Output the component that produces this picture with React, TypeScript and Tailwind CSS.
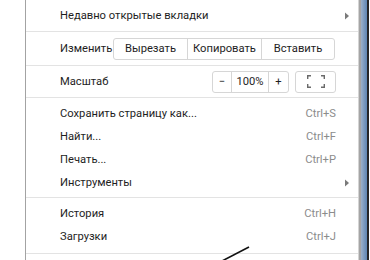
import { ReactNode } from "react";

const font = { fontFamily: 'Roboto, "Noto Sans", sans-serif' };

function Arrow() {
  return (
    <svg width="4" height="8" viewBox="0 0 4 8">
      <path d="M0 0.5 L4 4 L0 7.5 Z" fill="#7a7a7a" />
    </svg>
  );
}

function Item({ label, shortcut }: { label: string; shortcut: string }) {
  return (
    <div className="flex h-[23px] items-center justify-between pl-[34px] pr-[22px]">
      <span className="text-[#1e1e1e]">{label}</span>
      <span className="text-[#8c8c8c]">{shortcut}</span>
    </div>
  );
}

function SubItem({ label, className }: { label: string; className: string }) {
  return (
    <div className={`flex items-center justify-between pl-[34px] pr-[9px] ${className}`}>
      <span className="text-[#1e1e1e]">{label}</span>
      <Arrow />
    </div>
  );
}

function Seg({ children, w, last }: { children: ReactNode; w: string; last?: boolean }) {
  return (
    <div className={`flex h-full items-center justify-center ${w} ${last ? "" : "border-r border-[#d6d6d6]"}`}>
      {children}
    </div>
  );
}

export default function App() {
  return (
    <div className="relative flex h-[260px] w-[370px] overflow-hidden bg-white text-[11.2px] leading-none" style={font}>
      <div className="w-[26px] shrink-0 border-r border-[#a3a3a3]" />
      <div className="flex w-[332px] flex-col">
        {/* recent tabs */}
        <SubItem label="Недавно открытые вкладки" className="h-[32px] border-b border-[#e3e3e3] pt-[1px]" />

        {/* edit */}
        <div className="flex h-[34px] items-center border-b border-[#e3e3e3] pl-[34px]">
          <span className="w-[53px] text-[#1e1e1e]">Изменить</span>
          <div className="flex h-[22px] items-center rounded-[3px] border border-[#d6d6d6] text-[#1e1e1e]">
            <Seg w="w-[74px]">Вырезать</Seg>
            <Seg w="w-[74px]">Копировать</Seg>
            <Seg w="w-[72px]" last>Вставить</Seg>
          </div>
        </div>

        {/* zoom */}
        <div className="flex h-[32px] items-center border-b border-[#e3e3e3] pl-[34px]">
          <span className="flex-1 text-[#1e1e1e]">Масштаб</span>
          <div className="flex h-[22px] items-center rounded-[3px] border border-[#d6d6d6] text-[#1e1e1e]">
            <Seg w="w-[19px]">−</Seg>
            <Seg w="w-[37px]">100%</Seg>
            <Seg w="w-[19px]" last>+</Seg>
          </div>
          <div className="ml-[6px] mr-[22px] flex h-[22px] w-[41px] items-center justify-center rounded-[3px] border border-[#d6d6d6]">
            <svg width="18" height="13" viewBox="0 0 18 13" fill="none" stroke="#6a6a6a" strokeWidth="1.4">
              <path d="M0.7 4 V0.7 H4 M14 0.7 H17.3 V4 M17.3 9 V12.3 H14 M4 12.3 H0.7 V9" />
            </svg>
          </div>
        </div>

        {/* page actions */}
        <div className="flex h-[100px] flex-col border-b border-[#e3e3e3] pt-[4px]">
          <Item label="Сохранить страницу как..." shortcut="Ctrl+S" />
          <Item label="Найти..." shortcut="Ctrl+F" />
          <Item label="Печать..." shortcut="Ctrl+P" />
          <SubItem label="Инструменты" className="h-[23px]" />
        </div>

        {/* history */}
        <div className="flex h-[56px] flex-col border-b border-[#e3e3e3] pt-[4px]">
          <Item label="История" shortcut="Ctrl+H" />
          <Item label="Загрузки" shortcut="Ctrl+J" />
        </div>
      </div>

      {/* window frame */}
      <div className="flex shrink-0">
        <div className="w-[1px] bg-[#d4d4d4]" />
        <div className="w-[2px] bg-[#a4a4a4]" />
        <div className="w-[6px] bg-gradient-to-r from-[#9bb0c8] to-[#5f86b3]" />
        <div className="w-[2px] bg-[#262626]" />
      </div>

      {/* annotation stroke */}
      <svg className="absolute left-0 top-0" width="370" height="260">
        <line x1="222" y1="261" x2="249" y2="247" stroke="#111" strokeWidth="1.6" />
      </svg>
    </div>
  );
}
